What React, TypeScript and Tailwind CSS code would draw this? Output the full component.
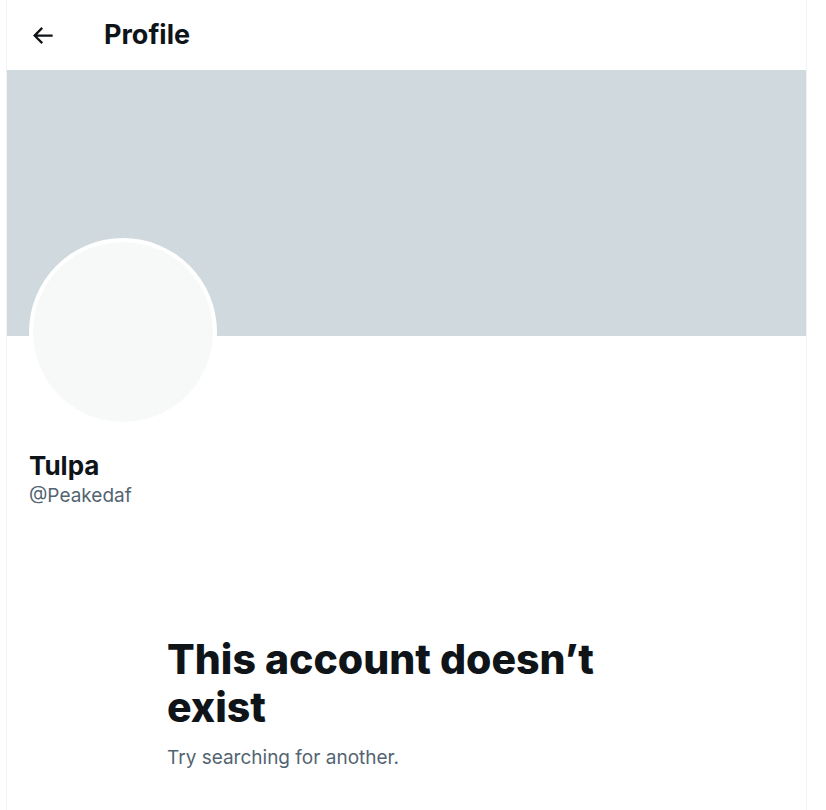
// App.tsx

import React from 'react';

const BackArrow: React.FC = () => (
  <svg viewBox="0 0 24 24" className="w-[27px] h-[27px]" fill="#0f1419">
    <path d="M7.414 13l5.043 5.043-1.414 1.414L3.586 12l7.457-7.457 1.414 1.414L7.414 11H21v2H7.414z" />
  </svg>
);

const App: React.FC = () => {
  return (
    <div className="min-h-screen bg-white pl-[6px]" style={{ fontFamily: 'Inter, "Liberation Sans", sans-serif' }}>
      <div className="w-[801px] min-h-[810px] border-x border-[#eff3f4] text-[#0f1419]">
        {/* header */}
        <div className="h-[70px] flex items-center">
          <div className="ml-[22px] w-[27px] flex items-center">
            <BackArrow />
          </div>
          <h1 className="ml-[48px] text-[27px] font-bold leading-none -mt-[2px]">Profile</h1>
        </div>

        {/* banner */}
        <div className="h-[266px] bg-[#cfd9de]" />

        {/* avatar + names */}
        <div className="px-[22px]">
          <div className="-mt-[98px] w-[188px] h-[188px] rounded-full bg-white p-[4px]">
            <div className="w-full h-full rounded-full bg-[#f7f9f9]" />
          </div>
          <div className="mt-[24px]">
            <div className="text-[26px] font-bold leading-[32px]">Tulpa</div>
            <div className="text-[19px] leading-[27px] text-[#536471]">@Peakedaf</div>
          </div>
        </div>

        {/* empty state */}
        <div className="max-w-[533px] mx-auto px-[27px] mt-[126px]">
          <h2 className="text-[41px] font-extrabold leading-[48px]">
            This account doesn’t exist
          </h2>
          <p className="mt-[13px] text-[19px] leading-[27px] text-[#536471]">Try searching for another.</p>
        </div>
      </div>
    </div>
  );
};

export default App;
